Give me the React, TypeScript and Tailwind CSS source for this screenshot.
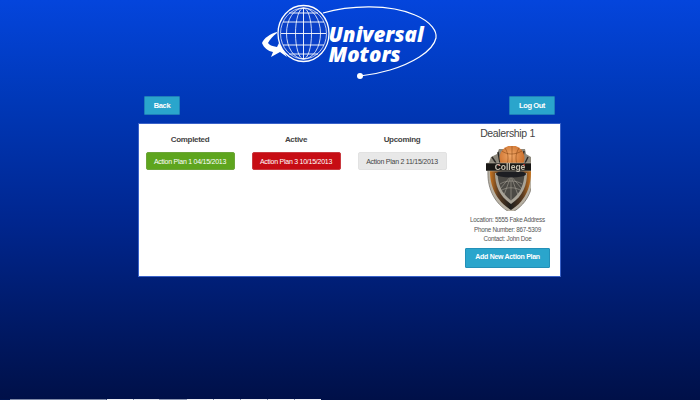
const planBtn = 'flex h-[18px] w-[89px] items-center justify-center whitespace-nowrap rounded-[2px] border text-[7px] leading-none tracking-[-0.25px]'
const colTitle = 'mb-[7px] text-[8px] font-bold leading-[11px] tracking-[-0.3px] text-[#444]'
const column = 'flex w-[106px] flex-col items-center pr-[4px] pt-[10px]'
const navBtn = 'h-[19px] rounded-[1px] border border-[#1f7fb8] bg-[#2aa5cc] text-[7.5px] font-bold tracking-[-0.4px] text-white'

// the row of something cut off by the bottom edge of the window
const footerBits = [
  { w: 10, c: 'bg-[#001450]' },
  { w: 96, c: 'bg-[#7f8aa8]' },
  { w: 1, c: 'bg-[#3a4a78]' },
  { w: 26, c: 'bg-[#eef0f5]' },
  { w: 1, c: 'bg-[#7f8aa8]' },
  { w: 25, c: 'bg-[#dfe3ec]' },
  { w: 28, c: 'bg-[#8f99b4]' },
  { w: 26, c: 'bg-[#eef0f5]' },
  { w: 1, c: 'bg-[#7f8aa8]' },
  { w: 26, c: 'bg-[#eef0f5]' },
  { w: 1, c: 'bg-[#7f8aa8]' },
  { w: 26, c: 'bg-[#eef0f5]' },
  { w: 1, c: 'bg-[#7f8aa8]' },
  { w: 26, c: 'bg-[#eef0f5]' },
  { w: 1, c: 'bg-[#7f8aa8]' },
  { w: 26, c: 'bg-[#eef0f5]' },
]

function Logo() {
  return (
    <div className="relative h-[88px] w-[220px]">
      <svg width="220" height="88" viewBox="0 0 220 88" fill="none" className="absolute left-0 top-0">
        <path d="M83 13 C110 5 150 4 175 15 C192 22 197 32 196 38 C193 52 170 64 150 70 C140 73 130 75 120 76" stroke="#fff" strokeWidth="1.2" />
        <circle cx="120" cy="76" r="3" fill="#fff" />
        {/* arrow head left of the globe */}
        <path d="M37 32 C30 34 24 38 22 43 C24 48 28 51 33 52 L31 57 L40 52 L47 57 L42 48 L39 43 L37 47 C32 46 29 45 28 43 C30 39 33 36 37 33 Z" fill="#fff" />
        {/* globe */}
        <ellipse cx="63.5" cy="33.5" rx="25.5" ry="28" fill="#0a40c8" stroke="#fff" strokeWidth="1.3" />
        <ellipse cx="63.5" cy="33.5" rx="23" ry="25.5" stroke="#fff" strokeWidth="0.7" />
        <ellipse cx="63.5" cy="33.5" rx="8" ry="25.5" stroke="#fff" strokeWidth="0.8" />
        <ellipse cx="63.5" cy="33.5" rx="17" ry="25.5" stroke="#fff" strokeWidth="0.8" />
        <path d="M63.5 8 V59 M41 33.5 H86 M43 22 H84 M49 13 H78 M43 45 H84 M49 54 H78" stroke="#fff" strokeWidth="0.9" />
      </svg>
      <div className="absolute left-[89px] top-[24px] font-['Open_Sans',sans-serif] text-[20.5px] font-extrabold italic leading-[20px] text-white">
        <div>Universal</div>
        <div>Motors</div>
      </div>
    </div>
  )
}

function Badge() {
  return (
    <svg width="47" height="65" viewBox="6 3 47 65" fill="none" className="blur-[0.3px]">
      <defs>
        <radialGradient id="ball" cx="0.45" cy="0.4" r="0.7">
          <stop offset="0" stopColor="#f2a868" />
          <stop offset="1" stopColor="#c0601c" />
        </radialGradient>
        <linearGradient id="rim" x1="0" y1="0" x2="1" y2="0">
          <stop offset="0" stopColor="#c8741f" />
          <stop offset="0.2" stopColor="#5a3c22" />
          <stop offset="0.5" stopColor="#1f1e1c" />
          <stop offset="0.8" stopColor="#5a3c22" />
          <stop offset="1" stopColor="#c8741f" />
        </linearGradient>
      </defs>
      {/* crown pieces behind the ball */}
      <path d="M13 14 L19 11 L21 6 H47 L48 11 L53 14 L55 22 H10 Z" fill="#8d887c" />
      <path d="M14 14 L18 20 M20 9 L22 20 M50 14 L47 20 M46 8 L44 20" stroke="#2a2724" strokeWidth="1.4" />
      <circle cx="34" cy="15" r="12.5" fill="url(#ball)" />
      <path d="M24 8 C29 12 37 12 44 8 M34 3 V27 M27 5 C31 11 31 19 27 25 M41 5 C37 11 37 19 41 25" stroke="#80400f" strokeWidth="0.5" />
      {/* shield */}
      <path d="M10 27 C9 42 14 60 33 70 C52 60 56 42 55 27 Z" fill="#b8b1a3" stroke="#55504a" strokeWidth="0.6" />
      <path d="M12 28 C12 42 17 57 33 67 C49 57 53 42 53 28 Z" fill="url(#rim)" />
      <path d="M17 30 C17 42 21 53 33 61 C45 53 49 42 49 30 Z" fill="#a8a397" />
      <path d="M19.5 30 C20 41 23 50 33 57.5 C43 50 46 41 46.5 30 Z" fill="#4c4a45" />
      <path d="M33 32 V57 M33 33 L22 46 M33 33 L44 46 M33 33 L26 52 M33 33 L40 52 M22 41 C28 37 38 37 44 41 M24 47 C29 44 37 44 42 47" stroke="#a5a095" strokeWidth="0.6" />
      <ellipse cx="33" cy="31" rx="15" ry="3.6" fill="#1d1e22" />
      {/* name band */}
      <rect x="8" y="20" width="47" height="8" rx="1" fill="#191715" />
      <path d="M9 20 H54 M9 28 H54" stroke="#b9b2a2" strokeWidth="0.6" />
      <circle cx="21" cy="22" r="0.9" fill="#d0342c" />
      <circle cx="46" cy="22" r="0.9" fill="#d0342c" />
      <text x="32" y="27" textAnchor="middle" fontFamily="Liberation Sans" fontSize="8.5" fontWeight="700" fill="#c8c1b1">College</text>
    </svg>
  )
}

export default function App() {
  return (
    <div className="relative flex h-[400px] w-[700px] flex-col items-center overflow-hidden bg-[linear-gradient(to_bottom,#0445dc_0%,#0038b8_25%,#00268f_55%,#001048_100%)] pr-[1px] font-['Liberation_Sans',sans-serif]">
      <div className="flex h-[96px] w-[220px]">
        <Logo />
      </div>

      <div className="flex h-[27px] w-[411px] items-start justify-between">
        <button className={navBtn + ' w-[36px]'}>Back</button>
        <button className={navBtn + ' w-[46px]'}>Log Out</button>
      </div>

      <div className="flex h-[154px] w-[423px] border border-[#3a62c8] bg-white">
        <div className={column}>
          <div className={colTitle}>Completed</div>
          <div className={planBtn + ' border-[#6da53a] bg-[#5ea51e] text-white'}>Action Plan 1 04/15/2013</div>
        </div>
        <div className={column}>
          <div className={colTitle}>Active</div>
          <div className={planBtn + ' border-[#c93a40] bg-[#c70d14] text-white'}>Action Plan 3 10/15/2013</div>
        </div>
        <div className={column}>
          <div className={colTitle}>Upcoming</div>
          <div className={planBtn + ' border-[#e2e2e2] bg-[#e8e8e8] text-[#444]'}>Action Plan 2 11/15/2013</div>
        </div>
        <div className="flex flex-1 flex-col items-center pr-[2px] pt-[2px]">
          <div className="text-[10.5px] leading-[14px] tracking-[-0.35px] text-[#444]">Dealership 1</div>
          <div className="mb-[4px] mt-[6px] flex">
            <Badge />
          </div>
          <div className="whitespace-nowrap text-center text-[6.3px] leading-[9.5px] tracking-[-0.25px] text-[#555]">
            <div>Location: 5555 Fake Address</div>
            <div>Phone Number: 867-5309</div>
            <div>Contact: John Doe</div>
          </div>
          <button className="mt-[4px] h-[20px] w-[85px] whitespace-nowrap rounded-[1px] border border-[#2390b8] bg-[#2aa5cc] text-[7px] font-bold tracking-[-0.3px] text-white">Add New Action Plan</button>
        </div>
      </div>

      <div className="absolute bottom-0 left-0 flex h-[1px]">
        {footerBits.map((b, i) => (
          <div key={i} className={b.c} style={{ width: b.w }} />
        ))}
      </div>
    </div>
  )
}
